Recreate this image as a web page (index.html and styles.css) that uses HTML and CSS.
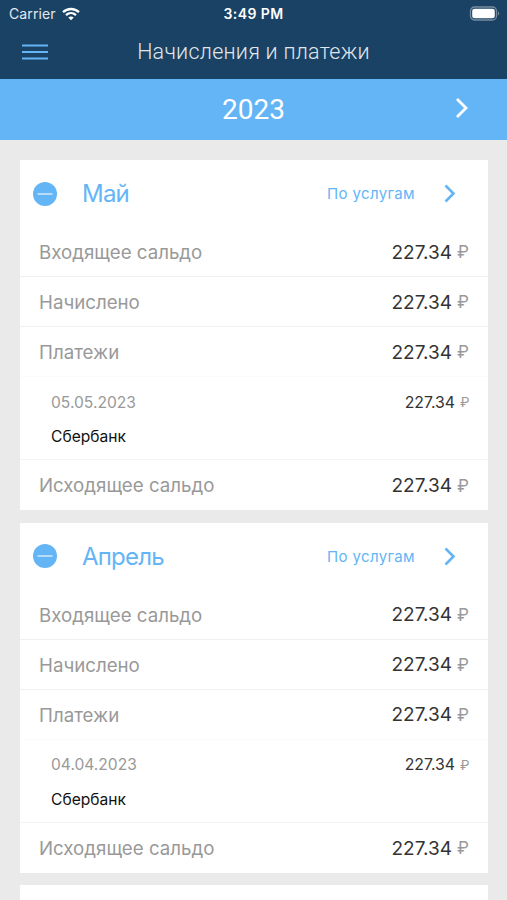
FILE: index.html
```html
<!DOCTYPE html>
<html lang="ru">
<head>
<meta charset="utf-8">
<meta name="viewport" content="width=device-width, initial-scale=1">
<title>Начисления и платежи</title>
<link rel="stylesheet" href="styles.css">
</head>
<body>
<div class="screen">
  <header class="topbar">
    <div class="status">
      <div class="status-left">
        <span class="carrier">Carrier</span>
        <svg class="wifi" width="18" height="14" viewBox="0 0 18 14" fill="none" stroke="#fff" stroke-width="2.3">
          <path d="M1 5.2C5.5.9 12.500.9 17 5.2M4 8.200c2.900-2.700 7.100-2.700 10 0"/>
          <path d="M6.300 10.500c1.500-1.500 3.900-1.500 5.400 0L9 13.300z" fill="#fff" stroke="none"/>
        </svg>
      </div>
      <span class="clock">3:49 PM</span>
      <svg class="battery" width="31" height="15" viewBox="0 0 31 15">
        <rect x="1.500" y="1" width="26" height="13" rx="4" fill="none" stroke="#778d9f" stroke-width="1.300"/>
        <rect x="3.200" y="2.800" width="22.600" height="9.400" rx="2.300" fill="#fff"/>
        <path d="M29 5.500c1.600.7 1.600 3.300 0 4z" fill="#778d9f"/>
      </svg>
    </div>
    <div class="nav">
      <svg class="menu" width="26" height="16" viewBox="0 0 26 16" stroke="#64b5f6" stroke-width="2">
        <path d="M0 1.500h26M0 8h26M0 14.500h26"/>
      </svg>
      <h1 class="title">Начисления и платежи</h1>
    </div>
  </header>
  <div class="yearbar">
    <span class="year">2023</span>
    <svg class="year-next" width="14" height="22" viewBox="0 0 14 22" fill="none" stroke="#fff" stroke-width="2.800"><path d="M1 2l9 9-9 9"/></svg>
  </div>
  <main class="list">
    <section class="card">
      <div class="card-head">
        <svg class="toggle" width="24" height="24" viewBox="0 0 24 24"><circle cx="12" cy="12" r="12" fill="#64b5f6"/><path d="M4.500 12h15" stroke="#d9edfd" stroke-width="1.400"/></svg>
        <h2 class="month">Май</h2>
        <span class="services">По услугам</span>
        <svg class="chevron" width="12" height="19" viewBox="0 0 12 19" fill="none" stroke="#64b5f6" stroke-width="2.600"><path d="M1.500 1.500l8 8-8 8"/></svg>
      </div>
      <div class="row"><span class="label">Входящее сальдо</span><span class="amount">227.34</span><span class="rub">₽</span></div>
      <div class="row"><span class="label">Начислено</span><span class="amount">227.34</span><span class="rub">₽</span></div>
      <div class="row faint"><span class="label">Платежи</span><span class="amount">227.34</span><span class="rub">₽</span></div>
      <div class="payment">
        <div class="payment-line"><span class="date">05.05.2023</span><span class="amount">227.34</span><span class="rub">₽</span></div>
        <div class="bank">Сбербанк</div>
      </div>
      <div class="row last"><span class="label">Исходящее сальдо</span><span class="amount">227.34</span><span class="rub">₽</span></div>
    </section>
    <section class="card">
      <div class="card-head">
        <svg class="toggle" width="24" height="24" viewBox="0 0 24 24"><circle cx="12" cy="12" r="12" fill="#64b5f6"/><path d="M4.500 12h15" stroke="#d9edfd" stroke-width="1.400"/></svg>
        <h2 class="month">Апрель</h2>
        <span class="services">По услугам</span>
        <svg class="chevron" width="12" height="19" viewBox="0 0 12 19" fill="none" stroke="#64b5f6" stroke-width="2.600"><path d="M1.500 1.500l8 8-8 8"/></svg>
      </div>
      <div class="row"><span class="label">Входящее сальдо</span><span class="amount">227.34</span><span class="rub">₽</span></div>
      <div class="row"><span class="label">Начислено</span><span class="amount">227.34</span><span class="rub">₽</span></div>
      <div class="row faint"><span class="label">Платежи</span><span class="amount">227.34</span><span class="rub">₽</span></div>
      <div class="payment">
        <div class="payment-line"><span class="date">04.04.2023</span><span class="amount">227.34</span><span class="rub">₽</span></div>
        <div class="bank">Сбербанк</div>
      </div>
      <div class="row last"><span class="label">Исходящее сальдо</span><span class="amount">227.34</span><span class="rub">₽</span></div>
    </section>
    <section class="card"></section>
  </main>
</div>
</body>
</html>
```

FILE: styles.css
```css
* { box-sizing: border-box; }
body { margin: 0; background: #eaeaea; font-family: Inter, "Liberation Sans", sans-serif; }
svg { display: block; flex: none; }
span, h1, h2 { white-space: nowrap; }
.screen { height: 900px; overflow: hidden; background: #eaeaea; }

.topbar { height: 79px; background: #194264; color: #fff; }
.status { height: 27px; padding: 0 7px 0 9px; display: grid; grid-template-columns: 1fr auto 1fr; align-items: center; }
.status-left { display: flex; align-items: center; gap: 6px; }
.carrier { font-size: 14px; letter-spacing: .1px; color: #e3e9ee; }
.clock { font-size: 14px; font-weight: 600; letter-spacing: .4px; margin-right: 2px; }
.battery { justify-self: end; }
.nav { height: 50px; padding: 0 22px; display: grid; grid-template-columns: 26px 1fr 26px; align-items: center; }
.title { margin: 0; text-align: center; font: 300 21.5px/26px Roboto, sans-serif; color: #e0e7ec; letter-spacing: .25px; }

.yearbar { height: 61px; padding: 0 37px; display: grid; grid-template-columns: 14px 1fr 14px; align-items: center; background: #64b5f6; }
.year { grid-column: 2; text-align: center; color: #fff; font-family: Roboto, sans-serif; font-size: 28px; font-weight: 400; }
.year-next { margin-top: -4px; }

.list { padding: 20px 19px 0 20px; display: flex; flex-direction: column; gap: 12.7px; }
.card { height: 350px; flex: none; background: #fff; }
.card-head { height: 67px; padding: 0 32px 0 13px; display: flex; align-items: center; }
.month { margin: 0 auto 0 25px; padding-top: 1px; font-size: 24px; line-height: 30px; font-weight: 400; letter-spacing: -.8px; color: #64b5f6; }
.services { font-size: 15px; color: #64b5f6; margin-right: 29px; letter-spacing: .35px; }
.row { height: 50px; padding: 0 19px; display: flex; align-items: center; border-bottom: 1px solid #f1f1f1; }
.row.faint { border-color: #fbfbfb; }
.row.last { border: 0; }
.label { padding-top: 2px; font-size: 18.7px; color: #999; }
.amount { margin-left: auto; padding-top: 1px; font-size: 19px; color: #333; }
.rub { width: 12px; margin-left: 5px; padding-top: 1px; font-size: 17px; color: #999; }
.row.last .label { padding-top: 1px; }
.payment { height: 83px; padding: 13px 19px 0 31px; border-bottom: 1px solid #f4f4f4; }
.payment-line { height: 24px; display: flex; align-items: center; }
.date { font-size: 15.600px; color: #999; }
.payment .amount { padding-top: 0; font-size: 15.800px; }
.payment .rub { width: 9px; padding-top: 0; font-size: 13.500px; }
.bank { margin-top: 11px; font-size: 15.600px; line-height: 24px; color: #111; }
```
